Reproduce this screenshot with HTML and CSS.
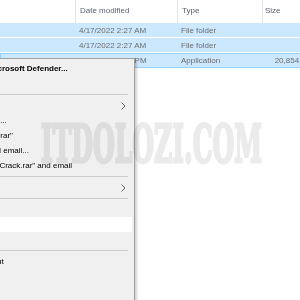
FILE: index.html
```html
<!DOCTYPE html>
<html>
<head>
<meta charset="utf-8">
<link rel="stylesheet" href="styles.css">
</head>
<body>
<div class="explorer">
  <div class="hdr">
    <div class="c name"></div>
    <div class="c date">Date modified</div>
    <div class="c type">Type</div>
    <div class="c size">Size</div>
  </div>
  <div class="rows">
    <div class="row sel">
      <div class="c name"></div>
      <div class="c date">4/17/2022 2:27 AM</div>
      <div class="c type">File folder</div>
      <div class="c size"></div>
    </div>
    <div class="row sel">
      <div class="c name"></div>
      <div class="c date">4/17/2022 2:27 AM</div>
      <div class="c type">File folder</div>
      <div class="c size"></div>
    </div>
    <div class="row sel focus">
      <div class="c name"></div>
      <div class="c date">4/17/2022 2:27 PM</div>
      <div class="c type">Application</div>
      <div class="c size">20,854 KB</div>
    </div>
  </div>
</div>

<div class="menu">
  <div class="item bold"><span>Scan with Microsoft Defender...</span></div>
  <div class="item"><span>Share</span></div>
  <div class="sep"></div>
  <div class="item"><span class="tight">Give access to</span><svg class="chev" width="5" height="8" viewBox="0 0 5 8"><polyline points="0.5,0.5 4,4 0.5,7.5" fill="none" stroke="#606060" stroke-width="1"/></svg></div>
  <div class="item"><span>Add to archive...</span></div>
  <div class="item"><span>Add to "Crack.rar"</span></div>
  <div class="item"><span>Compress and email...</span></div>
  <div class="item"><span>Compress to "Crack.rar" and email</span></div>
  <div class="sep"></div>
  <div class="item"><span>Send to</span><svg class="chev" width="5" height="8" viewBox="0 0 5 8"><polyline points="0.5,0.5 4,4 0.5,7.5" fill="none" stroke="#606060" stroke-width="1"/></svg></div>
  <div class="sep"></div>
  <div class="item"><span>Cut</span></div>
  <div class="item hover"><span>Copy</span></div>
  <div class="item"><span>Paste</span></div>
  <div class="sep"></div>
  <div class="item"><span>Create shortcut</span></div>
  <div class="item"><span>Delete</span></div>
  <div class="item"><span>Rename</span></div>
</div>

<svg class="watermark" width="230" height="50" viewBox="0 0 230 50">
  <text x="1" y="44" font-size="52" textLength="221" lengthAdjust="spacingAndGlyphs">ITDOLOZI.COM</text>
</svg>
</body>
</html>
```

FILE: styles.css
```css
html, body {
  margin: 0;
  padding: 0;
}
body {
  width: 300px;
  height: 300px;
  overflow: hidden;
  position: relative;
  background: #ffffff;
  font-family: "Liberation Sans", Arial, sans-serif;
  font-size: 8px;
  color: #000;
}
.explorer {
  width: 320px;
}
.hdr {
  display: flex;
  height: 23px;
  color: #5a6270;
}
.hdr .c {
  line-height: 22px;
}
.hdr .date,
.hdr .type,
.hdr .size {
  border-left: 1px solid #e5e5e5;
}
.c {
  flex: none;
  white-space: nowrap;
  overflow: hidden;
  box-sizing: border-box;
}
.name { width: 75px; }
.date { width: 102px; padding-left: 4px; }
.type { width: 85px; padding-left: 4px; }
.size { width: 58px; padding-left: 2px; }
.row .size {
  text-align: right;
  padding-right: 8px;
}
.rows {
  display: flex;
  flex-direction: column;
  gap: 1px;
}
.row {
  display: flex;
  height: 14px;
  line-height: 15px;
  color: #6d6d6d;
}
.row.sel {
  background: #cce8ff;
}
.row.focus {
  height: 15px;
  box-shadow: inset 0 0 0 1px #99d1ff;
  line-height: 16px;
}
.menu {
  position: absolute;
  left: -83px;
  top: 58px;
  width: 212px;
  height: 260px;
  padding: 2px;
  box-sizing: content-box;
  background: #f0f0f0;
  border: 1px solid #a0a0a0;
  box-shadow: 2px 2px 2px rgba(0, 0, 0, 0.18);
  display: flex;
  flex-direction: column;
}
.item {
  display: flex;
  align-items: center;
  height: 15px;
  padding-left: 29px;
  padding-right: 6px;
  white-space: nowrap;
}
.item .tight {
  letter-spacing: -0.25px;
}
.item.bold {
  font-weight: bold;
}
.item.hover {
  background: #ffffff;
}
.chev {
  margin-left: auto;
  flex: none;
}
.sep {
  height: 7px;
  display: flex;
  align-items: center;
  padding-left: 29px;
  padding-right: 4px;
}
.sep::after {
  content: "";
  flex: 1;
  height: 1px;
  background: #cccccc;
}
.watermark {
  position: absolute;
  left: 40px;
  top: 118px;
  font-family: "DejaVu Serif", "Liberation Serif", serif;
  font-weight: 900;
  fill: #ebebeb;
  stroke: #ebebeb;
  stroke-width: 3px;
  stroke-linejoin: miter;
  paint-order: stroke;
  mix-blend-mode: multiply;
}
```
